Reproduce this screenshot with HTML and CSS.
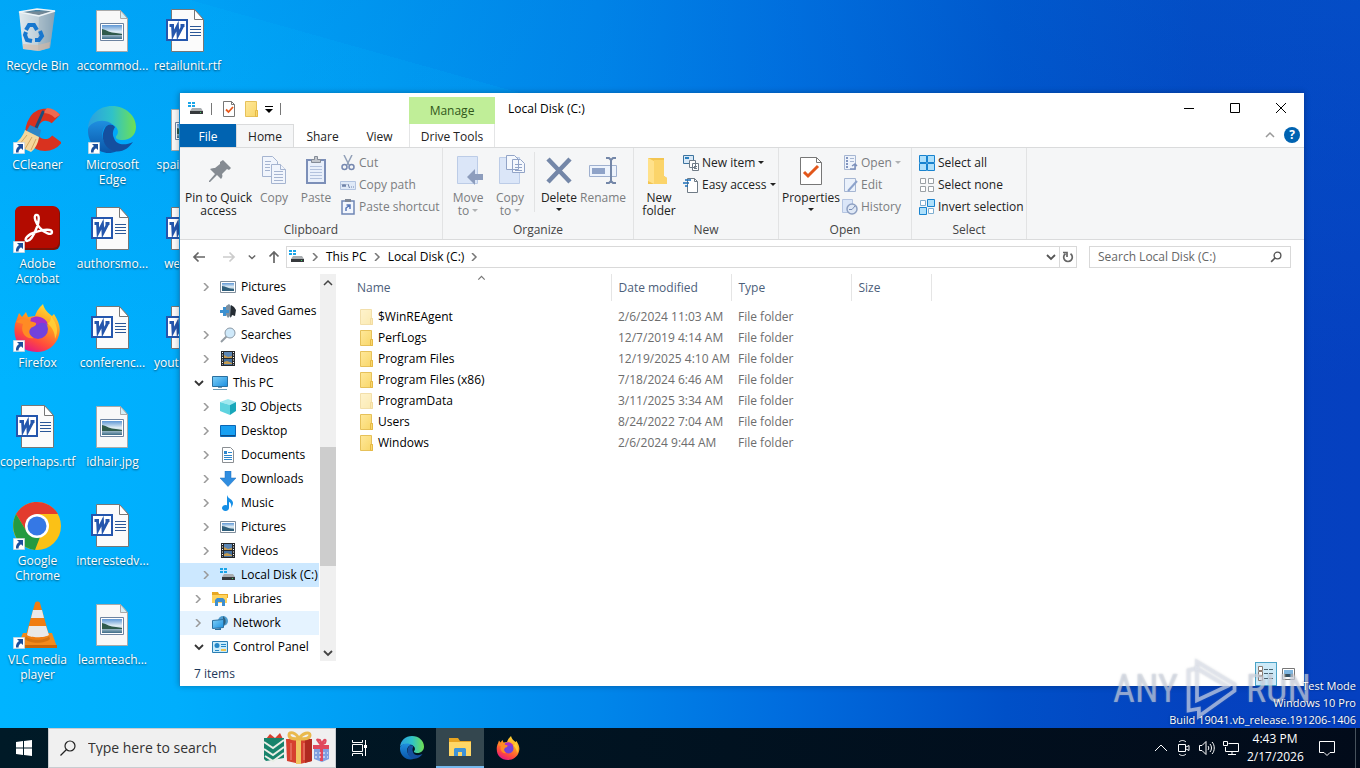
FILE: index.html
```html
<!DOCTYPE html>
<html lang="en">
<head>
  <meta charset="utf-8">
  <title>Local Disk (C:)</title>
  <meta name="viewport" content="width=device-width, initial-scale=1">
  <link rel="stylesheet" href="styles.css">
</head>
<body>
  <!-- Icon sprite -->
  <svg class="sprite" aria-hidden="true">
    <defs>
      <linearGradient id="g-edge" x1="0" y1="0" x2="1" y2="0"><stop offset="0" stop-color="#2b9fe0"/><stop offset=".5" stop-color="#2fc2c9"/><stop offset="1" stop-color="#6fe052"/></linearGradient>
      <linearGradient id="g-edge2" x1="0" y1="0" x2="0" y2="1"><stop offset="0" stop-color="#1f8fe0"/><stop offset="1" stop-color="#0a55a8"/></linearGradient>
      <linearGradient id="g-fox" x1=".8" y1="0" x2=".3" y2="1"><stop offset="0" stop-color="#ffe63d"/><stop offset=".4" stop-color="#ff9a1f"/><stop offset=".75" stop-color="#ff4a3d"/><stop offset="1" stop-color="#e31587"/></linearGradient>
      <linearGradient id="g-fold" x1="0" y1="0" x2="1" y2="1"><stop offset="0" stop-color="#ffe89a"/><stop offset="1" stop-color="#f8d668"/></linearGradient>
      <linearGradient id="g-bin" x1="0" y1="0" x2="1" y2="0"><stop offset="0" stop-color="#dfe9ee"/><stop offset=".6" stop-color="#b9cbd6"/><stop offset="1" stop-color="#7f9fb5"/></linearGradient>
      <linearGradient id="g-mon" x1="0" y1="0" x2="1" y2="1"><stop offset="0" stop-color="#7fd0f8"/><stop offset="1" stop-color="#1a8fe0"/></linearGradient>
      <linearGradient id="g-photo" x1="0" y1="0" x2="0" y2="1"><stop offset="0" stop-color="#5f97d5"/><stop offset=".5" stop-color="#e4f0f6"/><stop offset="1" stop-color="#3c6b86"/></linearGradient>
    </defs>

    <symbol id="i-arrow" viewBox="0 0 12 12"><path fill="#fff" stroke="#b9c6d2" stroke-width=".6" d="M.3.3h11.4v11.4H.3z"/><path fill="#1b4f9c" d="M4 2h6v6L8 6.200C6 7.500 5.500 8.500 5.600 10.500H3C2.700 7.500 3.800 5.500 6 4z"/></symbol>

    <symbol id="i-bin" viewBox="0 0 48 48">
      <path fill="url(#g-bin)" d="M6 5l36-1-5 37-11 3-16-2z"/><path fill="#8fa7b6" d="M6 5l20 4-1 35 12-3 5-37z" opacity=".45"/>
      <path fill="#5e7482" d="M8 5l16-3 17 2-15 4z" opacity=".7"/><path fill="none" stroke="#eef4f7" stroke-width="1.500" d="M6 5l18-3 18 2-16 5z"/>
      <path fill="#d7b9a4" opacity=".6" d="M10 37l15 1 12-3-1 6-11 3-15-2z"/>
      <g fill="none" stroke="#1677cf" stroke-width="4"><path d="M13 23l3-5 5 0 3 5"/><path d="M27 24l2 5-3 4h-4"/><path d="M19 34l-5-1-2-5 1-3"/></g>
    </symbol>
    <symbol id="i-jpg" viewBox="0 0 48 48">
      <path fill="#f8f8f8" stroke="#a9a9a9" d="M8.500 3.500h24l7 8v33h-31z"/><path fill="#d5eef5" stroke="#a9a9a9" d="M32.500 3.500v8h7z"/>
      <path fill="#fff" stroke="#6d83a0" d="M12.500 16.500h23v17h-23z"/><path fill="url(#g-photo)" d="M14 18h20v14H14z"/>
      <path fill="#2f5a4b" d="M14 22c5 1 8 4 14 4l6 1v1H14z"/>
    </symbol>
    <symbol id="i-word" viewBox="0 0 48 48">
      <path fill="#fbfbfb" stroke="#777" d="M8.500 2.500h23l9 10v32h-32z"/><path fill="#fff" stroke="#777" d="M31.500 2.500v10h9z"/>
      <path stroke="#2b5797" stroke-width="1.200" d="M27 19.500h11M27 22.500h11M27 25.500h11M27 28.500h11"/>
      <path fill="#fff" stroke="#2456ad" stroke-width="2" d="M4 13h20v20H4z"/>
      <path fill="none" stroke="#2456ad" stroke-width="2.800" d="M6.500 18.500h4.500M9.500 18.500l.5 9.500 4.500-9 .5 9 5-9.500M17.500 18.500h4"/>
    </symbol>
    <symbol id="i-ccleaner" viewBox="0 0 48 48">
      <path fill="none" stroke="#d9321f" stroke-width="12" d="M43 13C37 7 25 6 20 18s3 21 12 21c6 0 9-2 12-6"/>
      <path fill="#ee6a50" d="M34 2c5 0 10 3 13 7l-5 3c-4-4-8-5-12-5z"/>
      <path stroke="#1b4e7c" stroke-width="3" stroke-linecap="round" d="M30 6L22 24"/>
      <path fill="#2d86c6" d="M17 19l11 5-2 9-13-7z"/>
      <path fill="#f4d79c" d="M12 24l14 7c-1 7-4 12-8 15L1 38c5-3 9-8 11-14z"/><path stroke="#d2a660" d="M14 29L6 39M19 31l-7 12M23 33l-5 11"/>
    </symbol>
    <symbol id="i-edge" viewBox="0 0 48 48">
      <path fill="url(#g-edge)" d="M0 22C1 9 11 0 24 0c14 0 24 10 24 21 0 8-6 13-13 13-6 0-9-2-6-5 2-3 1-8-5-11-9-4-20-2-24 4z"/>
      <path fill="url(#g-edge2)" d="M0 23c3-8 16-11 24-5-8 0-11 8-9 15 2 6 7 10 14 12C15 52-1 40 0 23z"/>
      <path fill="#144f9f" d="M17 22c-5 9-1 20 9 23 8 2 15-3 19-9-8 4-17 3-19-4-2-4-1-8 1-11-3-4-8-3-10 1z"/>
    </symbol>
    <symbol id="i-acrobat" viewBox="0 0 48 48">
      <rect x="2" y="2" width="45" height="43" rx="6" fill="#7d1208"/><rect x="2" y="1" width="44" height="42" rx="6" fill="#b30b00"/>
      <path fill="none" stroke="#fff" stroke-width="2.400" d="M23 10c4-1 3 6 1 12-3 8-7 14-10 14-4-1 1-7 9-9 8-3 16-3 16 0 0 4-8 1-12-4-4-4-7-12-4-13z"/>
    </symbol>
    <symbol id="i-firefox" viewBox="0 0 48 48">
      <path fill="url(#g-fox)" d="M2 20l4-11 3 4 4-5 2 5 7-1c2-6 5-9 8-12 1 5 5 9 9 12l2-2c5 8 7 14 5 21-3 11-12 17-22 17C9 48-1 38 2 20z"/>
      <circle cx="25" cy="25" r="10" fill="#7242dc"/><path fill="#a62fc7" d="M18 14c7-4 16 0 17 7-4-3-8-3-10 0l-8-2z"/>
      <path fill="#ff8b24" d="M3 18c4-4 9-5 13-1 3 1 6 1 7 2 1 3-4 4-5 5-4 4 0 9 3 10-9 2-14-7-11-14z"/>
      <path fill="#ffd43a" d="M38 12c6 8 8 15 4 23 0-7-3-12-8-16 3 0 4-3 4-7z" opacity=".8"/>
    </symbol>
    <symbol id="i-chrome" viewBox="0 0 48 48">
      <circle cx="24" cy="24" r="24" fill="#fbc116"/>
      <path fill="#e33b2e" d="M3 12C8 4 16 0 24 0c9 0 17 5 21 12H24L14 30z"/>
      <path fill="#249a41" d="M3 12l11 18c3 5 8 6 13 5l-5 13C5 46-5 28 3 12z"/>
      <circle cx="24" cy="24" r="12" fill="#fff"/><circle cx="24" cy="24" r="9.500" fill="#3578e5"/>
    </symbol>
    <symbol id="i-vlc" viewBox="0 0 48 48">
      <path fill="#f28a1c" d="M10 32h29l5 14H4z"/><path fill="#c96508" d="M4 44h40v3H4z"/>
      <path fill="#f07d12" d="M22 2c1-2 4-2 5 0l9 32c-4 6-19 6-23 0z"/>
      <path fill="#e9e9e9" d="M20 9h9l2 8H18zM16 25h17l3 9c-4 3-19 3-22 0z"/><path fill="#b95c06" opacity=".5" d="M13 35c4 5 19 5 23 0l1 3c-5 5-20 5-25 0z"/>
    </symbol>

    <symbol id="i-drive" viewBox="0 0 16 16"><path fill="#1aa5e8" d="M0 1h3v2H0zM4 1h3v2H4zM0 4h3v2H0zM4 4h3v2H4z"/><path fill="#a9adb0" d="M4 7h9l2 3H2z"/><path fill="#36393c" d="M2 10h13v3H2z"/><path fill="#45d36a" d="M12 11h1v1h-1z"/></symbol>
    <symbol id="i-doccheck" viewBox="0 0 16 16"><path fill="#fff" stroke="#777" d="M2.500.5h8l3 3v12h-11z"/><path fill="none" stroke="#777" d="M10.500.5v3h3"/><path fill="none" stroke="#e8591c" stroke-width="1.800" d="M5 8.500l2.500 2.500L12 6"/></symbol>
    <symbol id="i-folder" viewBox="0 0 16 16"><path fill="url(#g-fold)" stroke="#e6c15a" d="M2.500.5h11v9h1v6h-12z"/><path fill="none" stroke="#e6b945" d="M12.500 9.500h2v6h-2z"/></symbol>
    <symbol id="i-picture" viewBox="0 0 16 16"><path fill="#fff" stroke="#7e8d9b" d="M.5 2.500h15v11H.5z"/><path fill="url(#g-photo)" d="M2 4h12v8H2z"/><path fill="#2f5f7c" d="M2 7c4 0 6 3 12 3v2H2z"/></symbol>
    <symbol id="i-games" viewBox="0 0 16 16"><path fill="#7f8f9d" d="M6 3l3-2 2 2 1 11-2-1-2 2-2-3z"/><path fill="#252c33" d="M11 2l3 2 2 3-1 6-3-1-2 3z"/><path fill="#3c90d0" d="M0 7l3 0 0-3h3v3h3v3H6v3H3v-3H0z"/></symbol>
    <symbol id="i-search" viewBox="0 0 16 16"><path stroke="#949ca3" stroke-width="2" d="M6.500 9.500L1 15"/><circle cx="10" cy="6" r="5" fill="#cfe9fa" stroke="#8a98a5"/></symbol>
    <symbol id="i-video" viewBox="0 0 16 16"><path fill="#25282b" d="M1 0h14v15H1z"/><path fill="#5b86b4" d="M4 1h8v6H4z"/><path fill="#c49b50" d="M4 4l4 2 4-1v2H4z"/><path fill="#4672a0" d="M4 8h8v6H4z"/><path fill="#c49b50" d="M4 11l3-1 5 2v1H4z"/><path stroke="#fff" stroke-width="1" stroke-dasharray="1 1.500" d="M2.500 1v13M13.500 1v13"/></symbol>
    <symbol id="i-pc" viewBox="0 0 16 16"><path fill="url(#g-mon)" stroke="#2b6f9e" d="M.5 1.500h15v10H.5z"/><path fill="#6d9bb5" d="M6 12h4v1H6zM1 14h14v1H1z"/></symbol>
    <symbol id="i-3d" viewBox="0 0 16 16"><path fill="#9fe9f0" d="M0 3l8-3 8 3-6 3z"/><path fill="#5fd3df" d="M0 3l10 3v10L0 12z"/><path fill="#18a7ba" d="M10 6l6-3v9l-6 4z"/></symbol>
    <symbol id="i-desk" viewBox="0 0 16 16"><path fill="#18a0f2" stroke="#0a66b5" d="M.5 2.500h15v11H.5z"/><path fill="#0e4f88" d="M1 12h14v1H1z"/></symbol>
    <symbol id="i-docs" viewBox="0 0 16 16"><path fill="#fff" stroke="#8b8f93" d="M2.500.5h8l3 3v12h-11z"/><path fill="#2f86cb" d="M4 4h3v3H4z"/><path stroke="#2f86cb" d="M8 5.500h4M4 8.500h8M4 10.500h8M4 12.500h8"/></symbol>
    <symbol id="i-down" viewBox="0 0 16 16"><path fill="#2f8de0" stroke="#1c6fbd" stroke-width=".5" d="M5 0h6v7h5l-8 8.500L0 7h5z"/></symbol>
    <symbol id="i-music" viewBox="0 0 16 16"><path fill="#168fe6" d="M7 0c1 4 6 4 6 8 0 2-1 3-2 5 1-4-1-6-2-6v6a3.500 3 0 1 1-2-2.700z"/></symbol>
    <symbol id="i-lib" viewBox="0 0 16 16"><path fill="#e8a823" d="M0 1h6l1 2h9v4H0z"/><path fill="#ffd35c" d="M0 4h15v8H0z"/><path fill="#3e8ed0" d="M3 15V9l2-2h6l2 2v6h-3v-4H6v4z"/></symbol>
    <symbol id="i-net" viewBox="0 0 16 16"><circle cx="11" cy="6" r="5" fill="#4e9ccf"/><path fill="#2e617f" d="M11 1c3 2 4 8 0 10z"/><path fill="url(#g-mon)" stroke="#2a6f9f" d="M.5 5.500l11-1v8l-11 1z"/><path fill="#2a6f9f" d="M3 14l6-1v2H3z"/></symbol>
    <symbol id="i-cpl" viewBox="0 0 16 16"><path fill="#c9ecfb" stroke="#2a7fb4" d="M.5 2.500h15v11H.5z"/><circle cx="5" cy="6.500" r="2.500" fill="#2487c7"/><path fill="#f3c24c" d="M9 10h5v2H9z"/><path stroke="#2487c7" d="M9 5.500h5M9 7.500h5M3 11.500h4"/></symbol>

    <symbol id="i-pin" viewBox="0 0 32 32"><path fill="#858b92" d="M20 5l8 8-2 2-2-1-5 5c1 2 0 4-1 5l-4-4-7 7-1 0 0-1 6-7-5-5c2-1 4-1 5-1l5-4 0-2z"/></symbol>
    <symbol id="i-copy" viewBox="0 0 32 32"><g fill="#f1f5fc" stroke="#a5b4d0"><path d="M4.500 1.500h10l5 5v15h-15z"/><path d="M13.500 9.500h9l5 5v14h-14z"/><path d="M22.500 9.500v5h5M7 6.500h6M7 9.500h5M7 12.500h5M7 15.500h5M16 16.500h9M16 19.500h9M16 22.500h9M16 25.500h9"/></g></symbol>
    <symbol id="i-paste" viewBox="0 0 32 32"><path fill="#e9f0fb" stroke="#7c8fb8" stroke-width="2" d="M7 5h18v23H7z"/><path fill="#c2c6cc" stroke="#858c98" d="M11.500 4.500h3v-3h3v3h3v3h-9z"/><path stroke="#b3c2dd" d="M10 11.500h12M10 14.500h12M10 17.500h12M10 20.500h12M10 23.500h12"/></symbol>
    <symbol id="i-cut" viewBox="0 0 16 16"><path stroke="#92a0b8" stroke-width="1.500" d="M4 0l5 10M12 0L7 10"/><g fill="none" stroke="#7688b0" stroke-width="1.500"><circle cx="4.500" cy="12" r="2.500"/><circle cx="11.500" cy="12" r="2.500"/></g></symbol>
    <symbol id="i-path" viewBox="0 0 16 16"><path fill="#dfe9f7" stroke="#b2c3df" d="M.5 4.500h15v8H.5z"/><path fill="none" stroke="#6f83aa" d="M2 7l1 3 1-3 1 3 1-3M8 7l1.500 4M11 10h1M13 10h1"/></symbol>
    <symbol id="i-pshort" viewBox="0 0 16 16"><path fill="#f2f6fd" stroke="#6f86b5" stroke-width="1.500" d="M2 2h12v13H2z"/><path fill="#7f8897" d="M5 0h6v3H5z"/><path fill="none" stroke="#5878b8" stroke-width="1.500" d="M6 12V9l4-3M6.500 6H10v4"/></symbol>
    <symbol id="i-move" viewBox="0 0 32 32"><path fill="#dbe6f8" stroke="#bccce7" d="M5.500 1.500h20v27h-20z"/><path fill="#8d9dbd" d="M15 22l8-8v5h8v6h-8v5z"/></symbol>
    <symbol id="i-copyto" viewBox="0 0 32 32"><path fill="#dbe6f8" stroke="#bccce7" d="M5.500 2.500h20v26h-20z"/><g fill="#f5f8fd" stroke="#92a4c7"><path d="M12.500.5h8l4 4v10h-12zM18.500 4.500h8l4 4v9h-12z"/><path d="M21 9.500h7M21 12.500h7M21 15.500h7"/></g></symbol>
    <symbol id="i-del" viewBox="0 0 32 32"><path stroke="#7487a8" stroke-width="4.500" d="M5 4l22 23M27 4L5 27"/></symbol>
    <symbol id="i-ren" viewBox="0 0 32 32"><path fill="#edf3fc" stroke="#9fb0cf" d="M2.500 10.500h27v11h-27z"/><path fill="#8fa3c8" d="M5 13h13v6H5z"/><path fill="none" stroke="#7487a8" stroke-width="2" d="M19 3h3l2 2 2-2h3M24 4v24M19 28h3l2-2 2 2h3"/></symbol>
    <symbol id="i-newf" viewBox="0 0 32 32"><path fill="#f3c551" d="M5 3h16v18l3 2v6H5z"/><path fill="#ffe18a" d="M5 3l6 3v23l-6-3z"/><path fill="#fbd46a" d="M11 5h10v16l3 2v6H11z"/></symbol>
    <symbol id="i-newitem" viewBox="0 0 16 16"><path fill="#d9e9f7" stroke="#3e749e" d="M.5.500h10v8H.5z"/><path fill="#2a7fbf" d="M2 2h4v2H2z"/><path fill="#fff" stroke="#6f7b86" d="M6.500 5.500h6v7h-6zM9.500 8.500h6v7h-6z"/><path stroke="#6f7b86" d="M11 11.500h3M11 13.500h3"/></symbol>
    <symbol id="i-easy" viewBox="0 0 16 16"><path fill="#fff" stroke="#6f7b86" d="M4.500 1.500h7l3 3v11h-10z"/><path fill="none" stroke="#6f7b86" d="M11.500 1.500v3h3"/><path stroke="#1d6fb8" stroke-width="1.500" d="M2 3h6M0 6h6M2 9h3"/></symbol>
    <symbol id="i-props" viewBox="0 0 32 32"><path fill="#fff" stroke="#777" d="M5.500 2.500h16l5 5v22h-21z"/><path fill="none" stroke="#777" d="M21.500 2.500v5h5"/><path fill="none" stroke="#e2571b" stroke-width="3" d="M9 17l4 4 10-10"/></symbol>
    <symbol id="i-open" viewBox="0 0 16 16"><path fill="#eef3fb" stroke="#a6b6d2" d="M2.500.5h11v14h-11z"/><path stroke="#8296c0" stroke-width="2" stroke-dasharray="2 1" d="M5 2v11"/><path stroke="#a6b6d2" d="M8 3.500h4M8 6.500h4"/><path fill="none" stroke="#7c90bb" stroke-width="1.500" d="M8 14h5V9M10 11l3-2 2 2"/></symbol>
    <symbol id="i-edit" viewBox="0 0 16 16"><path fill="#eaf1fb" stroke="#a6b6d2" d="M2.500 1.500h11v13h-11z"/><path stroke="#8da3cc" stroke-width="2" d="M15 4l-9 10"/></symbol>
    <symbol id="i-hist" viewBox="0 0 16 16"><path fill="#dbe6f8" stroke="#b5c5e1" d="M.5.500h10v13H.5z"/><circle cx="10" cy="10" r="5" fill="#dfe8f5" stroke="#8ea0c2" stroke-width="1.500"/><path fill="none" stroke="#7a8db5" d="M13 7l-3 3.500H7"/></symbol>
    <symbol id="i-all" viewBox="0 0 16 16"><path fill="#aee0fb" stroke="#1883cf" d="M.5.500h7v7h-7zM8.500.500h7v7h-7zM.5 8.500h7v7h-7zM8.500 8.500h7v7h-7z"/></symbol>
    <symbol id="i-none" viewBox="0 0 16 16"><path fill="#fff" stroke="#9aa0a5" d="M1.500 1.500h5v5h-5zM9.500 1.500h5v5h-5zM1.500 9.500h5v5h-5zM9.500 9.500h5v5h-5z"/></symbol>
    <symbol id="i-inv" viewBox="0 0 16 16"><path fill="#aee0fb" stroke="#1883cf" d="M8.500.500h7v7h-7zM.5 8.500h7v7h-7z"/><path fill="#fff" stroke="#7faed0" d="M1.500 1.500h5v5h-5zM9.500 9.500h5v5h-5z"/></symbol>

    <symbol id="i-chev" viewBox="0 0 8 8"><path fill="none" stroke="currentColor" stroke-width="1.500" d="M2 0l4 4-4 4"/></symbol>
    <symbol id="i-vchev" viewBox="0 0 10 10"><path fill="none" stroke="currentColor" stroke-width="1.800" d="M1 3l4 4 4-4"/></symbol>
    <symbol id="i-uchev" viewBox="0 0 10 10"><path fill="none" stroke="currentColor" stroke-width="1.500" d="M1 7l4-4 4 4"/></symbol>
    <symbol id="i-tri" viewBox="0 0 6 6"><path fill="currentColor" d="M0 1h6L3 4z"/></symbol>
    <symbol id="i-left" viewBox="0 0 14 14"><path fill="none" stroke="currentColor" stroke-width="1.700" d="M13 7H2M6.500 2.500L2 7l4.500 4.500"/></symbol>
    <symbol id="i-glass" viewBox="0 0 16 16"><circle cx="10" cy="6" r="4.500" fill="none" stroke="currentColor" stroke-width="1.800"/><path stroke="currentColor" stroke-width="2.200" d="M7 9l-5.500 5.500"/></symbol>
    <symbol id="i-glass-thin" viewBox="0 0 16 16"><circle cx="10" cy="6" r="5" fill="none" stroke="currentColor" stroke-width="1.200"/><path stroke="currentColor" stroke-width="1.200" d="M6.500 9.500L.5 15.500"/></symbol>
  </svg>

  <main class="desktop">
    <div class="icons">
      <a class="icon" href="#"><svg><use href="#i-bin"/></svg><span>Recycle Bin</span></a>
      <a class="icon" href="#"><svg><use href="#i-ccleaner"/></svg><svg class="shortcut"><use href="#i-arrow"/></svg><span>CCleaner</span></a>
      <a class="icon" href="#"><svg><use href="#i-acrobat"/></svg><svg class="shortcut"><use href="#i-arrow"/></svg><span>Adobe Acrobat</span></a>
      <a class="icon" href="#"><svg><use href="#i-firefox"/></svg><svg class="shortcut"><use href="#i-arrow"/></svg><span>Firefox</span></a>
      <a class="icon" href="#"><svg><use href="#i-word"/></svg><span>coperhaps.rtf</span></a>
      <a class="icon" href="#"><svg><use href="#i-chrome"/></svg><svg class="shortcut"><use href="#i-arrow"/></svg><span>Google Chrome</span></a>
      <a class="icon" href="#"><svg><use href="#i-vlc"/></svg><svg class="shortcut"><use href="#i-arrow"/></svg><span>VLC media player</span></a>

      <a class="icon" href="#"><svg><use href="#i-jpg"/></svg><span>accommod...</span></a>
      <a class="icon" href="#"><svg><use href="#i-edge"/></svg><svg class="shortcut"><use href="#i-arrow"/></svg><span>Microsoft Edge</span></a>
      <a class="icon" href="#"><svg><use href="#i-word"/></svg><span>authorsmo...</span></a>
      <a class="icon" href="#"><svg><use href="#i-word"/></svg><span>conferenc...</span></a>
      <a class="icon" href="#"><svg><use href="#i-jpg"/></svg><span>idhair.jpg</span></a>
      <a class="icon" href="#"><svg><use href="#i-word"/></svg><span>interestedv...</span></a>
      <a class="icon" href="#"><svg><use href="#i-jpg"/></svg><span>learnteach...</span></a>

      <a class="icon" href="#"><svg><use href="#i-word"/></svg><span>retailunit.rtf</span></a>
      <a class="icon" href="#"><svg><use href="#i-jpg"/></svg><span>spainer.jpg</span></a>
      <a class="icon" href="#"><svg><use href="#i-word"/></svg><span>weha.rtf</span></a>
      <a class="icon" href="#"><svg><use href="#i-word"/></svg><span>youthare.rtf</span></a>
    </div>

    <section class="window">
      <header class="top">
        <div class="top-left">
          <div class="quick">
            <svg class="s16"><use href="#i-drive"/></svg><i class="bar"></i>
            <button aria-label="Properties"><svg class="s16"><use href="#i-doccheck"/></svg></button>
            <button aria-label="New folder"><svg class="s16"><use href="#i-folder"/></svg></button>
            <button aria-label="Customize toolbar"><svg class="s8" viewBox="0 0 8 8"><path d="M0 1h8v1H0zM0 4h8L4 8z"/></svg></button><i class="bar"></i>
          </div>
          <nav class="tabs">
            <button class="tab file">File</button>
            <button class="tab active">Home</button>
            <button class="tab">Share</button>
            <button class="tab">View</button>
          </nav>
        </div>
        <div class="context">
          <span class="manage">Manage</span>
          <button class="tab">Drive Tools</button>
        </div>
        <div class="top-right">
          <div class="title">
            <span>Local Disk (C:)</span>
            <div class="winbtns">
              <button aria-label="Minimize"><svg viewBox="0 0 10 10"><path d="M0 5.500h10"/></svg></button>
              <button aria-label="Maximize"><svg viewBox="0 0 10 10"><path d="M.5.500h9v9h-9z"/></svg></button>
              <button aria-label="Close"><svg viewBox="0 0 10 10"><path d="M0 0l10 10M10 0L0 10"/></svg></button>
            </div>
          </div>
          <div class="help">
            <button class="collapse" aria-label="Minimize the Ribbon"><svg class="s10"><use href="#i-uchev"/></svg></button>
            <button class="question" aria-label="Help">?</button>
          </div>
        </div>
      </header>

      <div class="ribbon">
        <section class="group clipboard">
          <div class="tools">
            <button class="big wide"><svg><use href="#i-pin"/></svg>Pin to Quick access</button>
            <button class="big off"><svg><use href="#i-copy"/></svg>Copy</button>
            <button class="big off"><svg><use href="#i-paste"/></svg>Paste</button>
            <div class="stack">
              <button class="small off"><svg><use href="#i-cut"/></svg>Cut</button>
              <button class="small off"><svg><use href="#i-path"/></svg>Copy path</button>
              <button class="small off"><svg><use href="#i-pshort"/></svg>Paste shortcut</button>
            </div>
          </div>
          <h2>Clipboard</h2>
        </section>
        <section class="group organize">
          <div class="tools">
            <button class="big off"><svg><use href="#i-move"/></svg>Move<span>to <svg class="tri"><use href="#i-tri"/></svg></span></button>
            <button class="big off"><svg><use href="#i-copyto"/></svg>Copy<span>to <svg class="tri"><use href="#i-tri"/></svg></span></button>
            <i class="split"></i>
            <button class="big"><svg><use href="#i-del"/></svg>Delete<svg class="tri"><use href="#i-tri"/></svg></button>
            <button class="big mid off"><svg><use href="#i-ren"/></svg>Rename</button>
          </div>
          <h2>Organize</h2>
        </section>
        <section class="group new">
          <div class="tools">
            <button class="big"><svg><use href="#i-newf"/></svg>New folder</button>
            <div class="stack">
              <button class="small"><svg><use href="#i-newitem"/></svg>New item<svg class="tri"><use href="#i-tri"/></svg></button>
              <button class="small"><svg><use href="#i-easy"/></svg>Easy access<svg class="tri"><use href="#i-tri"/></svg></button>
            </div>
          </div>
          <h2>New</h2>
        </section>
        <section class="group launch">
          <div class="tools">
            <button class="big props"><svg><use href="#i-props"/></svg>Properties<svg class="tri"><use href="#i-tri"/></svg></button>
            <div class="stack">
              <button class="small off"><svg><use href="#i-open"/></svg>Open<svg class="tri"><use href="#i-tri"/></svg></button>
              <button class="small off"><svg><use href="#i-edit"/></svg>Edit</button>
              <button class="small off"><svg><use href="#i-hist"/></svg>History</button>
            </div>
          </div>
          <h2>Open</h2>
        </section>
        <section class="group select">
          <div class="tools">
            <div class="stack">
              <button class="small"><svg><use href="#i-all"/></svg>Select all</button>
              <button class="small"><svg><use href="#i-none"/></svg>Select none</button>
              <button class="small"><svg><use href="#i-inv"/></svg>Invert selection</button>
            </div>
          </div>
          <h2>Select</h2>
        </section>
      </div>

      <div class="address">
        <div class="history">
          <button aria-label="Back"><svg class="s14"><use href="#i-left"/></svg></button>
          <button class="dim" aria-label="Forward"><svg class="s14 flip"><use href="#i-left"/></svg></button>
          <button aria-label="Recent locations"><svg class="s8"><use href="#i-vchev"/></svg></button>
          <button aria-label="Up"><svg class="s14 up"><use href="#i-left"/></svg></button>
        </div>
        <nav class="crumbs">
          <svg class="s16"><use href="#i-drive"/></svg>
          <svg class="sep"><use href="#i-chev"/></svg><a href="#">This PC</a>
          <svg class="sep"><use href="#i-chev"/></svg><a href="#">Local Disk (C:)</a>
          <svg class="sep"><use href="#i-chev"/></svg>
          <button class="drop" aria-label="Previous locations"><svg class="s10"><use href="#i-vchev"/></svg></button>
          <button class="refresh" aria-label="Refresh"><svg class="s12" viewBox="0 0 12 12"><path fill="none" stroke="#666" stroke-width="1.700" d="M8.500 2.700a4.300 4.300 0 1 1-5 0M1 1.500h4V6"/></svg></button>
        </nav>
        <label class="find">
          <input type="search" placeholder="Search Local Disk (C:)" aria-label="Search Local Disk (C:)">
          <svg class="s12"><use href="#i-glass"/></svg>
        </label>
      </div>

      <div class="content">
        <ul class="tree">
          <li class="sub"><svg class="tw"><use href="#i-chev"/></svg><svg class="s16"><use href="#i-picture"/></svg><a href="#">Pictures</a></li>
          <li class="sub"><svg class="tw"></svg><svg class="s16"><use href="#i-games"/></svg><a href="#">Saved Games</a></li>
          <li class="sub"><svg class="tw"><use href="#i-chev"/></svg><svg class="s16"><use href="#i-search"/></svg><a href="#">Searches</a></li>
          <li class="sub"><svg class="tw"><use href="#i-chev"/></svg><svg class="s16"><use href="#i-video"/></svg><a href="#">Videos</a></li>
          <li><svg class="tw expanded"><use href="#i-vchev"/></svg><svg class="s16"><use href="#i-pc"/></svg><a href="#">This PC</a></li>
          <li class="sub"><svg class="tw"><use href="#i-chev"/></svg><svg class="s16"><use href="#i-3d"/></svg><a href="#">3D Objects</a></li>
          <li class="sub"><svg class="tw"><use href="#i-chev"/></svg><svg class="s16"><use href="#i-desk"/></svg><a href="#">Desktop</a></li>
          <li class="sub"><svg class="tw"><use href="#i-chev"/></svg><svg class="s16"><use href="#i-docs"/></svg><a href="#">Documents</a></li>
          <li class="sub"><svg class="tw"><use href="#i-chev"/></svg><svg class="s16"><use href="#i-down"/></svg><a href="#">Downloads</a></li>
          <li class="sub"><svg class="tw"><use href="#i-chev"/></svg><svg class="s16"><use href="#i-music"/></svg><a href="#">Music</a></li>
          <li class="sub"><svg class="tw"><use href="#i-chev"/></svg><svg class="s16"><use href="#i-picture"/></svg><a href="#">Pictures</a></li>
          <li class="sub"><svg class="tw"><use href="#i-chev"/></svg><svg class="s16"><use href="#i-video"/></svg><a href="#">Videos</a></li>
          <li class="sub selected"><svg class="tw"><use href="#i-chev"/></svg><svg class="s16"><use href="#i-drive"/></svg><a href="#">Local Disk (C:)</a></li>
          <li><svg class="tw"><use href="#i-chev"/></svg><svg class="s16"><use href="#i-lib"/></svg><a href="#">Libraries</a></li>
          <li class="hover"><svg class="tw"><use href="#i-chev"/></svg><svg class="s16"><use href="#i-net"/></svg><a href="#">Network</a></li>
          <li><svg class="tw expanded"><use href="#i-vchev"/></svg><svg class="s16"><use href="#i-cpl"/></svg><a href="#">Control Panel</a></li>
        </ul>
        <div class="scroll">
          <button aria-label="Scroll up"><svg class="s10"><use href="#i-uchev"/></svg></button>
          <div class="track"><div class="thumb"></div></div>
          <button aria-label="Scroll down"><svg class="s10"><use href="#i-vchev"/></svg></button>
        </div>
        <div class="files">
          <table>
            <colgroup><col class="c-name"><col class="c-col"><col class="c-col"><col class="c-size"></colgroup>
            <thead>
              <tr><th>Name<svg class="sort"><use href="#i-uchev"/></svg></th><th>Date modified</th><th>Type</th><th>Size</th></tr>
            </thead>
            <tbody>
              <tr><td><span class="name hid"><svg class="s16"><use href="#i-folder"/></svg>$WinREAgent</span></td><td>2/6/2024 11:03 AM</td><td>File folder</td><td></td></tr>
              <tr><td><span class="name"><svg class="s16"><use href="#i-folder"/></svg>PerfLogs</span></td><td>12/7/2019 4:14 AM</td><td>File folder</td><td></td></tr>
              <tr><td><span class="name"><svg class="s16"><use href="#i-folder"/></svg>Program Files</span></td><td>12/19/2025 4:10 AM</td><td>File folder</td><td></td></tr>
              <tr><td><span class="name"><svg class="s16"><use href="#i-folder"/></svg>Program Files (x86)</span></td><td>7/18/2024 6:46 AM</td><td>File folder</td><td></td></tr>
              <tr><td><span class="name hid"><svg class="s16"><use href="#i-folder"/></svg>ProgramData</span></td><td>3/11/2025 3:34 AM</td><td>File folder</td><td></td></tr>
              <tr><td><span class="name"><svg class="s16"><use href="#i-folder"/></svg>Users</span></td><td>8/24/2022 7:04 AM</td><td>File folder</td><td></td></tr>
              <tr><td><span class="name"><svg class="s16"><use href="#i-folder"/></svg>Windows</span></td><td>2/6/2024 9:44 AM</td><td>File folder</td><td></td></tr>
            </tbody>
          </table>
        </div>
      </div>

      <footer class="status">
        <span>7 items</span>
        <div class="views">
          <button class="on" aria-label="Details"><svg class="s16" viewBox="0 0 16 16"><path fill="#fff" stroke="#8a7a70" d="M.5.500h4v4h-4zM.5 5.500h4v4h-4zM.5 10.500h4v4h-4z"/><path stroke="#4b6470" stroke-dasharray="4 1" d="M6 3.500h10M6 7.500h10M6 12.500h10"/></svg></button>
          <button aria-label="Large icons"><svg class="s16" viewBox="0 0 16 16"><path fill="#fff" stroke="#777" d="M1.500 2.500h12v11h-12z"/><path fill="#7fb6df" d="M3 4h9v4H3z"/><path fill="#35505f" d="M3 8h9v3H3z"/></svg></button>
        </div>
      </footer>
    </section>

    <div class="anyrun">
      <span>ANY</span>
      <svg viewBox="0 0 64 64"><path d="M7 55V12l9-2V3l40 24v7L18 61v-8z"/><path d="M16 10v34l32-15z"/></svg>
      <span>RUN</span>
    </div>
    <p class="build">Test Mode<br>Windows 10 Pro<br>Build 19041.vb_release.191206-1406</p>
  </main>

  <footer class="taskbar">
    <button class="start" aria-label="Start"><svg class="s16" viewBox="0 0 16 16"><path fill="#fff" d="M0 2l7-1v6.500H0zM8 1l8-1v7.500H8zM0 8.500h7V15l-7-1zM8 8.500h8V16l-8-1z"/></svg></button>
    <label class="tasksearch">
      <svg class="s16"><use href="#i-glass-thin"/></svg>
      <input type="search" placeholder="Type here to search" aria-label="Type here to search">
      <svg class="gifts" viewBox="0 0 68 34">
        <path fill="#d6402f" d="M3 8l4-5 5 4 5-5 3 6z"/><path fill="#17836b" d="M1 7h20v20l-18 3-2-2z"/><path fill="none" stroke="#e9eee6" stroke-width="2" d="M1 11l9 6 11-8M1 18l9 6 11-8M2 25l8 5 11-8"/>
        <path fill="#d6402f" d="M23 8h26v22l-12 3-13-3z"/><path fill="#b02a20" d="M42 8h7v22l-7 2z"/><path fill="#f0c560" d="M33 8h5v25h-5z"/><path fill="none" stroke="#e9b94d" stroke-width="3" d="M36 8c-3-7-10-8-10-4s5 4 10 4c3-6 11-8 11-4s-5 4-11 4"/><path stroke="#f08a7c" d="M28 12v17M41 12v17"/>
        <path fill="#7f9fe0" d="M51 16h15v12l-7 3-8-3z"/><path fill="#e0485c" d="M50 14h16v4H50zM57 16h3v14h-3z"/><path fill="none" stroke="#e0485c" stroke-width="2" d="M58 14c-5-6-5-6-1-5l2 4c2-6 5-5 3-1z"/><path stroke="#fff" stroke-dasharray="2 2" d="M52 22h13M52 26h13"/>
      </svg>
    </label>
    <button class="task view" aria-label="Task View"><svg class="s16" viewBox="0 0 16 16"><path fill="none" stroke="#fff" d="M.5 0v2.500h10V0M.5 4.500h10v7H.5zM.5 16v-2.500h10V16M13.500 0v5M13.500 8v8"/><path fill="#fff" d="M12 5h3v3h-3z"/></svg></button>
    <button class="task" aria-label="Microsoft Edge"><svg class="s24"><use href="#i-edge"/></svg></button>
    <button class="task current" aria-label="File Explorer"><svg class="s24" viewBox="0 0 24 24"><path fill="#e8a420" d="M1 3h9l2 3h11v4H1z"/><path fill="#ffd766" d="M1 7h22v14H1z"/><path fill="#3f93d6" d="M6 21v-7l1-1h10l1 1v7h-4v-4h-4v4z"/></svg></button>
    <button class="task" aria-label="Firefox"><svg class="s24"><use href="#i-firefox"/></svg></button>
    <div class="tray">
      <button aria-label="Show hidden icons"><svg class="s12" viewBox="0 0 12 12"><path d="M0 9l6-6 6 6"/></svg></button>
      <button aria-label="Meet Now"><svg class="s16" viewBox="0 0 16 16"><path d="M3.500 4.500h7v7h-7zM11 7l3-1.500v5L11 9M4 2c2-2 5-2 7 0M4 14c2 2 5 2 7 0"/></svg></button>
      <button aria-label="Volume"><svg class="s16" viewBox="0 0 16 16"><path d="M.5 5.500H3l4-4v13l-4-4H.5zM9 6c1 1 1 3 0 4M11 4c2 2 2 6 0 8M13 2c3 3 3 9 0 12"/></svg></button>
      <button aria-label="Network"><svg class="s16" viewBox="0 0 16 16"><path d="M5.500 3.500h10v8H2.500V7M.5 1.500h4v4h-4zM9 12v3M5 14.500h8"/></svg></button>
      <time class="clock">4:43 PM<br>2/17/2026</time>
      <button class="notes" aria-label="Notifications"><svg class="s16" viewBox="0 0 16 16"><path d="M.5 1.500h15v11H11L8 15.500 5 12.500H.5z"/></svg></button>
      <i class="peek"></i>
    </div>
  </footer>
</body>
</html>
```
FILE: styles.css
```css
*, *::before, *::after { box-sizing: border-box; }
html, body { margin: 0; padding: 0; height: 100%; }
body {
  display: grid; grid-template-rows: 1fr 40px;
  position: relative; overflow: hidden;
  font-family: "Open Sans", "Noto Sans", sans-serif;
  font-size: 12px; line-height: 16px; color: #000;
  background:
    linear-gradient(to top right, rgba(0, 190, 255, .12) 50%, transparent 50%) 190px 0 / 330px 93px no-repeat,
    linear-gradient(180deg, rgba(0, 120, 220, .22), rgba(0, 160, 240, 0) 50%),
    linear-gradient(90deg, #00b4ff 0%, #00aefd 13%, #009cf3 28%, #0086ea 44%, #006cde 58%, #0050c8 74%, #0442bf 88%, #0540c0 100%);
}
button { font: inherit; color: inherit; border: 0; background: none; padding: 0; display: flex; align-items: center; justify-content: center; }
a { color: inherit; text-decoration: none; }
svg { display: block; flex: none; }
h2 { margin: 0; font-size: 12px; font-weight: 400; }
input { font: inherit; border: 0; background: none; outline: 0; padding: 0; min-width: 0; }
.sprite { position: absolute; width: 0; height: 0; }
.s8 { width: 8px; height: 8px; }
.s10 { width: 10px; height: 10px; }
.s12 { width: 12px; height: 12px; }
.s14 { width: 14px; height: 14px; }
.s16 { width: 16px; height: 16px; }
.s24 { width: 24px; height: 24px; }

/* Desktop icons */
.desktop { min-height: 0; }
.icons {
  display: grid; grid-auto-flow: column; width: max-content;
  grid-template-rows: repeat(7, 99px); grid-auto-columns: 75px; padding-top: 7px;
}
.icon {
  display: flex; flex-direction: column; align-items: flex-start; position: relative;
  color: #fff; text-align: center; line-height: 15px; text-shadow: 0 1px 2px rgba(0, 0, 0, .6);
}
.icon svg { width: 48px; height: 48px; margin-left: 13px; }
.icon span { width: 75px; margin-top: 3px; }
.icon .shortcut { position: absolute; left: 0; top: 36px; width: 12px; height: 12px; }

/* Explorer window */
.window {
  position: absolute; left: 179px; right: 56px; top: 93px; bottom: 82px;
  display: flex; flex-direction: column; background: #fff;
  border-left: 1px solid #1a86c8; box-shadow: 0 0 6px rgba(0, 0, 0, .3);
}
.top { display: flex; height: 54px; flex: none; }
.top-left { display: flex; flex-direction: column; width: 229px; }
.quick { display: flex; align-items: center; height: 31px; padding-left: 8px; gap: 7px; }
.quick .bar { width: 1px; height: 12px; background: #777; }
.quick button + button { margin-left: -1px; }
.quick .bar:first-of-type { margin-right: 2px; }
.tabs { display: flex; height: 23px; }
.tab { flex: none; height: 23px; width: 57px; padding-top: 2px; color: #222; }
.tab.file { width: 56px; background: #0063b1; color: #fff; }
.tab.active { width: 58px; background: #f5f6f7; border: 1px solid #dadbdc; border-width: 1px 1px 0; padding-top: 1px; }
.context { display: flex; flex-direction: column; width: 86px; padding-top: 4px; }
.manage { background: #c0ee98; height: 27px; line-height: 28px; text-align: center; color: #31571a; }
.context .tab { width: 86px; border: 1px solid #e4e5e6; border-width: 0 1px; }
.top-right { flex: 1; }
.title { display: flex; justify-content: space-between; height: 30px; line-height: 32px; padding-left: 13px; }
.winbtns { display: flex; }
.winbtns button { width: 46px; height: 30px; }
.winbtns svg { width: 10px; height: 10px; fill: none; stroke: #000; }
.help { display: flex; align-items: center; justify-content: flex-end; gap: 9px; height: 24px; padding-right: 4px; color: #999; }
.question { width: 16px; height: 16px; border-radius: 50%; background: #0063b1; color: #fff; font-weight: 700; }

/* Ribbon */
.ribbon { display: flex; flex: none; height: 93px; background: #f5f6f7; border: 1px solid #dadbdc; border-width: 1px 0; color: #222; }
.group { padding-top: 4px; border-right: 1px solid #e2e3e4; }
.group h2 { text-align: center; line-height: 24px; color: #444; }
.tools { display: flex; height: 66px; padding-left: 4px; }
.clipboard { width: 263px; }
.organize { width: 191px; }
.new { width: 145px; }
.launch { width: 133px; }
.select { width: 115px; }
.big { flex-direction: column; justify-content: flex-start; width: 42px; padding-top: 3px; line-height: 13px; }
.big.wide { width: 69px; }
.big.mid { width: 46px; }
.big.props { width: 56px; }
.big > svg { width: 32px; height: 32px; margin-bottom: 4px; }
.big span { display: flex; align-items: center; gap: 3px; }
.tri, .big .tri, .small .tri { width: 6px; height: 6px; margin: 0; }
.big > .tri { margin-top: 3px; }
.split { width: 1px; height: 60px; background: #e2e3e4; margin: 0 3px; }
.off { color: #7b7d80; }
.off .tri { color: #b0b2b4; }
.stack { padding-left: 3px; }
.small { height: 22px; gap: 3px; white-space: nowrap; }
.small svg { width: 16px; height: 16px; }

/* Address bar */
.address { display: flex; align-items: center; flex: none; height: 34px; padding-right: 13px; }
.history { display: flex; align-items: center; width: 106px; padding-left: 12px; gap: 16px; color: #666; }
.history .dim { color: #ccc; }
.history button:nth-child(3) { margin: 0 -5px 0 -4px; }
.flip { transform: rotate(180deg); }
.up { transform: rotate(90deg); }
.crumbs { display: flex; align-items: center; flex: 1; height: 22px; border: 1px solid #d9d9d9; padding-left: 2px; }
.sep { width: 8px; height: 8px; margin: 0 7px 0 6px; color: #777; }
.drop { margin-left: auto; margin-right: 3px; color: #555; }
.refresh { width: 17px; height: 20px; border-left: 1px solid #d9d9d9; }
.find { display: flex; align-items: center; width: 202px; height: 22px; margin-left: 12px; padding: 0 8px; border: 1px solid #d9d9d9; color: #555; }
.find input { flex: 1; }
input::placeholder { color: #666; opacity: 1; }

/* Tree and file list */
.content { display: flex; flex: 1; min-height: 0; }
.tree { list-style: none; margin: 0; padding: 1px 0 0; width: 139px; overflow: hidden; }
.tree li { display: flex; align-items: center; height: 24px; padding-left: 14px; white-space: nowrap; }
.tree .sub { padding-left: 22px; }
.tree a { margin-left: 5px; }
.tw { width: 8px; height: 8px; margin-right: 10px; color: #999; }
.tw.expanded { width: 10px; height: 10px; margin-right: 8px; color: #333; }
.tree .selected { background: #cce8ff; }
.tree .hover { background: #e5f3ff; }
.scroll { display: flex; flex-direction: column; width: 16px; margin-left: 1px; background: #f0f0f0; color: #444; }
.scroll button { height: 17px; }
.track { flex: 1; display: grid; grid-template-rows: 156fr 119fr 78fr; }
.thumb { grid-row: 2; background: #cdcdcd; }
.files { flex: 1; padding-left: 14px; }
table { border-collapse: collapse; table-layout: fixed; width: 581px; }
.c-name { width: 261px; }
.c-col { width: 120px; }
.c-size { width: 80px; }
th { position: relative; height: 27px; padding: 0 7px; text-align: left; font-weight: 400; color: #4c607a; border-right: 1px solid #e5e5e5; }
.sort { position: absolute; left: 127px; top: 0; width: 9px; height: 8px; color: #777; }
tbody::before { content: ""; display: block; height: 5px; }
td { height: 21px; padding: 0 7px; color: #6d6d6d; white-space: nowrap; }
.name { display: flex; align-items: center; gap: 4px; color: #000; padding-left: 1px; }
.hid svg { opacity: .5; }
.status { display: flex; align-items: center; justify-content: space-between; flex: none; height: 25px; padding: 0 4px 0 14px; color: #1e395b; }
.views { display: flex; gap: 1px; }
.views button { width: 22px; height: 24px; }
.views .on { background: #cdeaf8; border: 1px solid #4aa3c7; }

/* Overlays above the window */
.anyrun {
  position: absolute; right: 49px; bottom: 47px; display: flex; align-items: center; gap: 4px;
  font-family: "Roboto Condensed", "Liberation Sans Narrow", sans-serif; font-size: 38px; line-height: 64px;
  color: rgba(226, 230, 238, .55); text-shadow: 0 0 2px rgba(120, 130, 150, .5);
}
.anyrun svg { width: 60px; height: 64px; fill: none; stroke: rgba(226, 230, 238, .6); stroke-width: 4; filter: drop-shadow(0 0 1px rgba(120, 130, 150, .5)); }
.build { position: absolute; right: 4px; bottom: 40px; margin: 0; color: #fff; text-align: right; font-size: 11px; line-height: 17px; text-shadow: 0 0 2px rgba(0, 0, 0, .6); }

/* Taskbar */
.taskbar { display: flex; position: relative; background: linear-gradient(90deg, #001a27, #020b1a); color: #fff; }
.start { width: 48px; }
.tasksearch { display: flex; align-items: center; width: 288px; padding: 0 4px 0 11px; gap: 12px; background: #f0f0f0; border: 1px solid #c8ccd0; color: #222; font-size: 14px; }
.tasksearch input { flex: 1; }
.tasksearch input::placeholder { color: #333; }
.gifts { width: 68px; height: 34px; }
.task { width: 48px; }
.task.view { margin-right: 4px; }
.task.current { background: #34474f; border-bottom: 2px solid #76b9ed; }
.tray { display: flex; align-items: center; margin-left: auto; gap: 8px; }
.tray svg { fill: none; stroke: #fff; }
.clock { text-align: center; line-height: 18px; width: 56px; }
.notes { margin: 0 12px 0 8px; }
.peek { width: 5px; height: 40px; border-left: 1px solid #47525c; }
```
